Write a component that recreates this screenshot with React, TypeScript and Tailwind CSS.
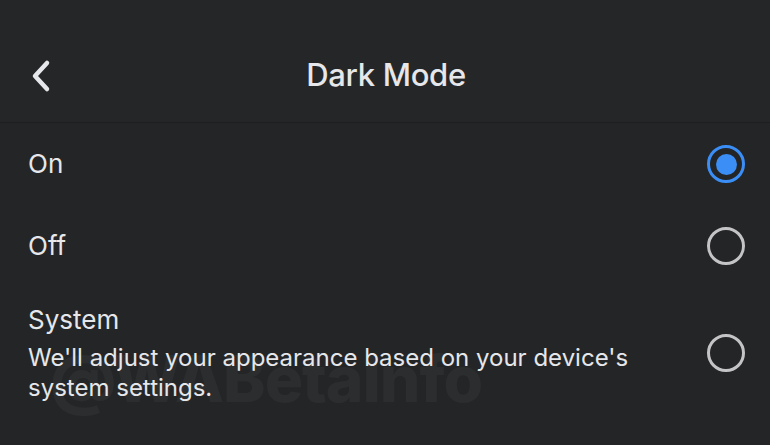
import { useState } from "react"

const options = [
  { id: "on", label: "On" },
  { id: "off", label: "Off" },
  {
    id: "system",
    label: "System",
    hint: "We'll adjust your appearance based on your device's system settings.",
  },
]

const Radio = ({ checked }: { checked: boolean }) =>
  checked ? (
    <span className="flex h-[38px] w-[38px] shrink-0 items-center justify-center rounded-full border-[3px] border-[#3a8ef6]">
      <span className="h-[21px] w-[21px] rounded-full bg-[#3a8ef6]" />
    </span>
  ) : (
    <span className="h-[38px] w-[38px] shrink-0 rounded-full border-[3px] border-[#c4c4c6]" />
  )

const App = () => {
  const [mode, setMode] = useState("on")

  return (
    <div className="relative h-[445px] w-[770px] overflow-hidden bg-[#242527] text-[#e6e7ea] font-['Inter','Roboto',sans-serif]">
      <header className="h-[123px] border-b border-[#1d1e20] bg-[#252628] px-[28px] pt-[54px]">
        <div className="relative flex h-[42px] items-center justify-center">
          <button className="absolute left-0 top-[5px]">
            <svg width="24" height="34" viewBox="0 0 24 34" fill="none">
              <path d="M19 4 L7 17 L19 30" stroke="#e6e7ea" strokeWidth="4.5" strokeLinecap="round" strokeLinejoin="round" />
            </svg>
          </button>
          <h1 className="pl-[2px] text-[31px] font-medium tracking-[-0.3px]">Dark Mode</h1>
        </div>
      </header>

      <ul>
        {options.map((o) => (
          <li
            key={o.id}
            onClick={() => setMode(o.id)}
            className={`flex cursor-pointer items-center justify-between pl-[28px] pr-[25px] ${o.hint ? "h-[132px]" : "h-[82px]"}`}
          >
            <div className="flex flex-col">
              <span className="text-[26px] leading-[32px]">{o.label}</span>
              {o.hint && <span className="mt-[7px] max-w-[620px] text-[24px] leading-[30px]">{o.hint}</span>}
            </div>
            <Radio checked={mode === o.id} />
          </li>
        ))}
      </ul>

      <div className="pointer-events-none absolute left-[50px] top-[347px] text-[64px] font-extrabold leading-none tracking-[-1px] text-white/[0.04]">
        @WABetaInfo
      </div>
    </div>
  )
}

export default App
